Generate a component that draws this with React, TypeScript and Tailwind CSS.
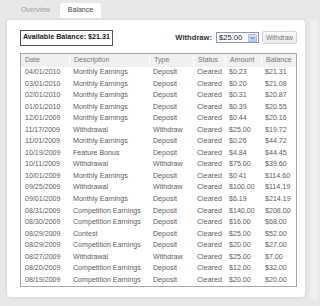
const rows: [string, string, string, string, string, string][] = [
  ["04/01/2010", "Monthly Earnings", "Deposit", "Cleared", "$0.23", "$21.31"],
  ["03/01/2010", "Monthly Earnings", "Deposit", "Cleared", "$0.20", "$21.08"],
  ["02/01/2010", "Monthly Earnings", "Deposit", "Cleared", "$0.31", "$20.87"],
  ["01/01/2010", "Monthly Earnings", "Deposit", "Cleared", "$0.39", "$20.55"],
  ["12/01/2009", "Monthly Earnings", "Deposit", "Cleared", "$0.44", "$20.16"],
  ["11/17/2009", "Withdrawal", "Withdraw", "Cleared", "$25.00", "$19.72"],
  ["11/01/2009", "Monthly Earnings", "Deposit", "Cleared", "$0.26", "$44.72"],
  ["10/19/2009", "Feature Bonus", "Deposit", "Cleared", "$4.84", "$44.45"],
  ["10/11/2009", "Withdrawal", "Withdraw", "Cleared", "$75.00", "$39.60"],
  ["10/01/2009", "Monthly Earnings", "Deposit", "Cleared", "$0.41", "$114.60"],
  ["09/25/2009", "Withdrawal", "Withdraw", "Cleared", "$100.00", "$114.19"],
  ["09/01/2009", "Monthly Earnings", "Deposit", "Cleared", "$6.19", "$214.19"],
  ["08/31/2009", "Competition Earnings", "Deposit", "Cleared", "$140.00", "$208.00"],
  ["08/30/2009", "Competition Earnings", "Deposit", "Cleared", "$16.00", "$68.00"],
  ["08/29/2009", "Contest", "Deposit", "Cleared", "$25.00", "$52.00"],
  ["08/29/2009", "Competition Earnings", "Deposit", "Cleared", "$20.00", "$27.00"],
  ["08/27/2009", "Withdrawal", "Withdraw", "Cleared", "$25.00", "$7.00"],
  ["08/20/2009", "Competition Earnings", "Deposit", "Cleared", "$12.00", "$32.00"],
  ["08/19/2009", "Competition Earnings", "Deposit", "Cleared", "$20.00", "$20.00"],
];

const headers = ["Date", "Description", "Type", "Status", "Amount", "Balance"];
const cols = "grid grid-cols-[48px_80px_44px_32px_36px_1fr]";

export default function App() {
  return (
    <div className="w-[320px] h-[306px] overflow-hidden bg-[#e8e8e8] font-['Liberation_Sans',Arial,sans-serif]">
      {/* Tabs */}
      <div className="flex items-end h-[18px] pl-[12px]">
        <div className="h-[15px] w-[47px] flex items-center justify-center text-[7px] text-[#a0a0a0]">
          Overview
        </div>
        <div className="ml-[1px] h-[15px] w-[41px] flex items-center justify-center text-[7px] text-[#444] bg-white rounded-t-[3px]">
          Balance
        </div>
      </div>

      <div className="flex">
        {/* Panel */}
        <div className="ml-[5px] w-[302px] h-[281px] bg-white rounded-[6px] rounded-tl-[4px] border-2 border-[#e0e0e0] pt-[9px] pl-[13px]">
          {/* Top row */}
          <div className="flex items-center h-[17px] w-[277px]">
            <div className="h-[16px] w-[93px] border border-[#555] flex items-center justify-center text-[7.2px] font-bold text-[#222]">
              Available Balance: $21.31
            </div>
            <div className="ml-auto flex items-center">
              <span className="text-[7.6px] font-bold text-[#333] mr-[4px]">Withdraw:</span>
              <div className="h-[11px] w-[43px] border border-[#7f9db9] bg-white flex items-center pl-[2px] pr-[1px]">
                <span className="text-[7.6px] text-[#222] leading-none">$25.00</span>
                <div className="ml-auto h-[8px] w-[9px] bg-gradient-to-b from-[#d8e4fc] to-[#b7ccf7] border border-[#a9bff0] rounded-[1px] flex items-center justify-center">
                  <svg width="5" height="4" viewBox="0 0 5 4">
                    <path d="M0.5 1 L2.5 3 L4.5 1" fill="none" stroke="#4d6185" strokeWidth="1" />
                  </svg>
                </div>
              </div>
              <div className="ml-[3px] h-[13px] w-[35px] border border-[#d2d2d2] rounded-[2px] bg-gradient-to-b from-[#fafafa] to-[#ececec] flex items-center justify-center text-[6.5px] text-[#777]">
                Withdraw
              </div>
            </div>
          </div>

          {/* Table */}
          <div className="mt-[7px] w-[277px] h-[234px] border border-[#a8a8a8]">
            <div className={`${cols} h-[12.5px] bg-[#f0f0f0] text-[7.1px] text-[#777]`}>
              {headers.map((h, i) => (
                <div
                  key={h}
                  className={`flex items-center pl-[4px] ${i > 0 ? "border-l border-white" : ""}`}
                >
                  {h}
                </div>
              ))}
            </div>
            {rows.map((r, ri) => (
              <div key={ri} className={`${cols} h-[11.55px] text-[7.1px] text-[#5e5e5e]`}>
                {r.map((c, ci) => (
                  <div key={ci} className="flex items-center pl-[4px] whitespace-nowrap">
                    {c}
                  </div>
                ))}
              </div>
            ))}
          </div>
        </div>
        {/* right strip */}
        <div className="ml-[3px] mt-[2px] w-[8px] h-[280px] bg-[#efefef]" />
      </div>
    </div>
  );
}
